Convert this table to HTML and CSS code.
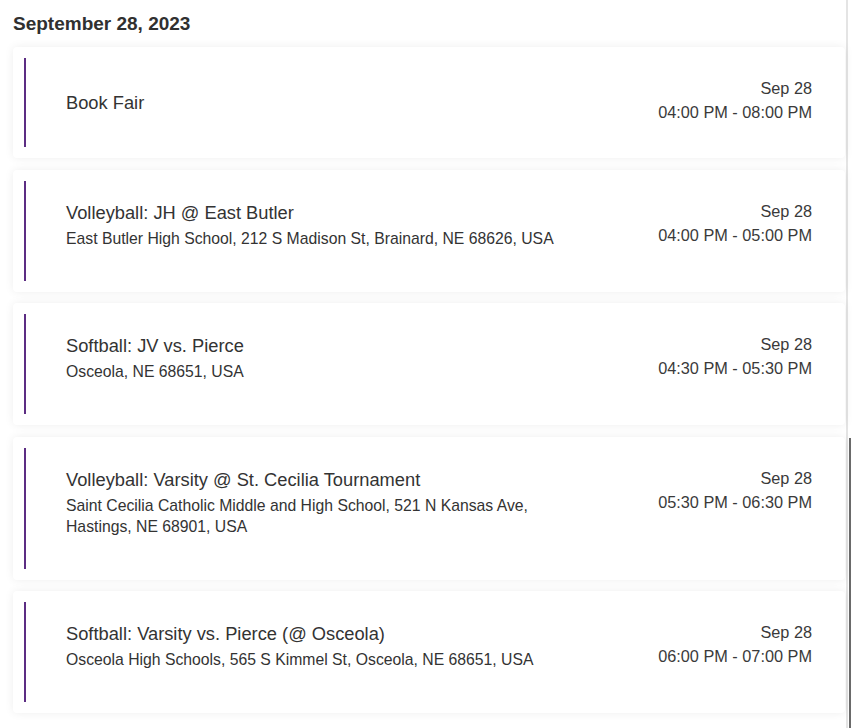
FILE: index.html
```html
<!DOCTYPE html>
<html lang="en">
<head>
<meta charset="utf-8">
<title>Events</title>
<link rel="stylesheet" href="styles.css">
</head>
<body>
<div class="frame">
  <main class="page">
    <h2 class="day">September 28, 2023</h2>
    <ul class="events">
      <li class="card">
        <div class="card-inner">
          <div class="info">
            <div class="title">Book Fair</div>
          </div>
          <div class="when">
            <div>Sep 28</div>
            <div>04:00 PM - 08:00 PM</div>
          </div>
        </div>
      </li>
      <li class="card">
        <div class="card-inner">
          <div class="info">
            <div class="title">Volleyball: JH @ East Butler</div>
            <div class="place">East Butler High School, 212 S Madison St, Brainard, NE 68626, USA</div>
          </div>
          <div class="when">
            <div>Sep 28</div>
            <div>04:00 PM - 05:00 PM</div>
          </div>
        </div>
      </li>
      <li class="card">
        <div class="card-inner">
          <div class="info">
            <div class="title">Softball: JV vs. Pierce</div>
            <div class="place">Osceola, NE 68651, USA</div>
          </div>
          <div class="when">
            <div>Sep 28</div>
            <div>04:30 PM - 05:30 PM</div>
          </div>
        </div>
      </li>
      <li class="card">
        <div class="card-inner">
          <div class="info">
            <div class="title">Volleyball: Varsity @ St. Cecilia Tournament</div>
            <div class="place">Saint Cecilia Catholic Middle and High School, 521 N Kansas Ave, Hastings, NE 68901, USA</div>
          </div>
          <div class="when">
            <div>Sep 28</div>
            <div>05:30 PM - 06:30 PM</div>
          </div>
        </div>
      </li>
      <li class="card">
        <div class="card-inner">
          <div class="info">
            <div class="title">Softball: Varsity vs. Pierce (@ Osceola)</div>
            <div class="place">Osceola High Schools, 565 S Kimmel St, Osceola, NE 68651, USA</div>
          </div>
          <div class="when">
            <div>Sep 28</div>
            <div>06:00 PM - 07:00 PM</div>
          </div>
        </div>
      </li>
    </ul>
  </main>
  <div class="scroll-thumb"></div>
</div>
</body>
</html>
```
FILE: styles.css
```css
* { box-sizing: border-box; }
html, body {
  margin: 0;
  padding: 0;
  background: #ffffff;
  font-family: "Liberation Sans", Arial, sans-serif;
  color: #333333;
}
.frame {
  position: relative;
  width: 852px;
  height: 728px;
  overflow: hidden;
}
.page {
  width: 848px;
  height: 728px;
  border-right: 2px solid #e4e4e4;
  padding: 0 1px 0 13px;
}
.day {
  margin: 0;
  padding-top: 12px;
  height: 47px;
  font-size: 19px;
  line-height: 23px;
  font-weight: 700;
  color: #303030;
}
.events {
  list-style: none;
  margin: 0;
  padding: 0;
  display: flex;
  flex-direction: column;
  gap: 11.5px;
}
.card {
  background: #ffffff;
  border-radius: 4px;
  box-shadow: 0 0 10px rgba(0, 0, 0, 0.07);
  padding: 11px 33px 11px 11px;
}
.card-inner {
  display: flex;
  justify-content: space-between;
  align-items: center;
  border-left: 2px solid #5c2d83;
  padding-left: 40px;
  min-height: 89px;
}
.info {
  padding: 20px 0;
}
.title {
  font-size: 18.3px;
  line-height: 24px;
  color: #333333;
}
.place {
  margin-top: 3px;
  margin-bottom: 12px;
  font-size: 15.75px;
  line-height: 21px;
  color: #333333;
  max-width: 500px;
}
.when {
  align-self: flex-start;
  padding-top: 18px;
  text-align: right;
  font-size: 16.3px;
  line-height: 24px;
  color: #3a3a3a;
  white-space: nowrap;
}
.scroll-thumb {
  position: absolute;
  left: 849px;
  top: 438px;
  width: 2px;
  height: 290px;
  background: #6a6a6a;
}
```
